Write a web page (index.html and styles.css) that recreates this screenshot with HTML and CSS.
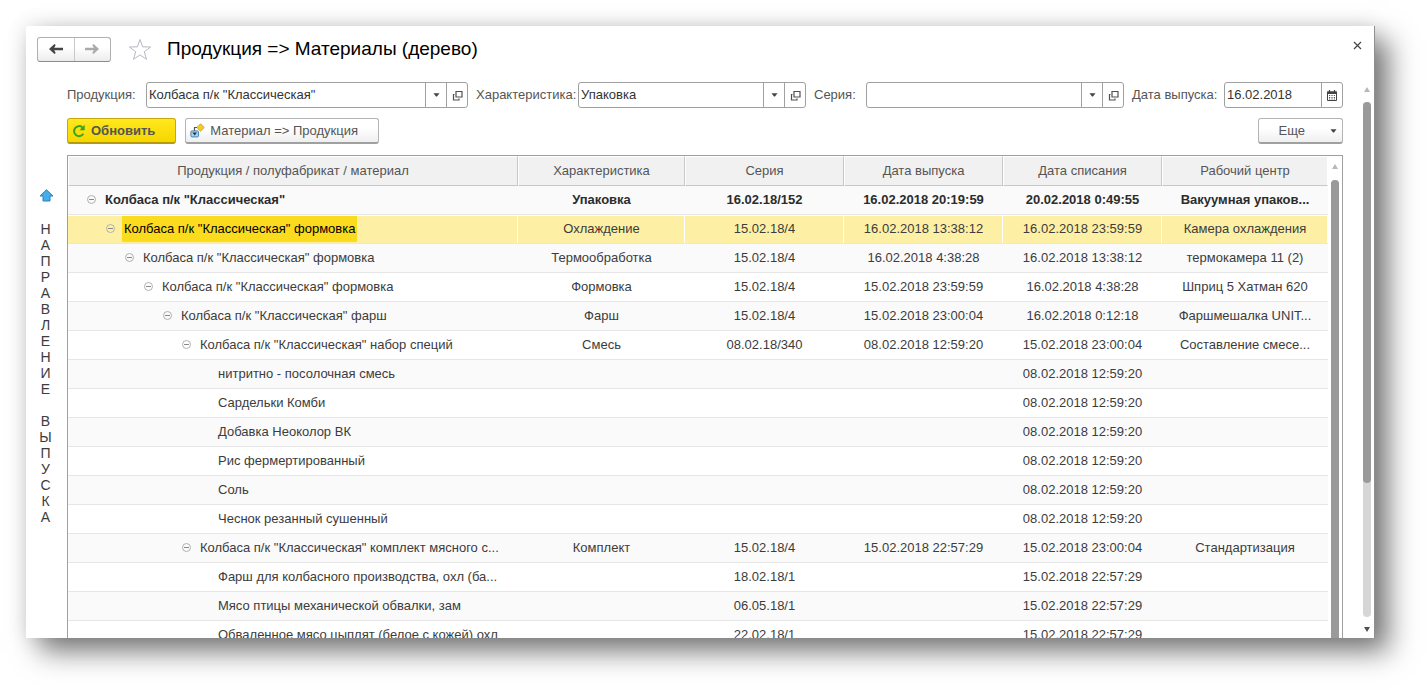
FILE: index.html
```html
<!DOCTYPE html>
<html lang="ru">
<head>
<meta charset="utf-8">
<title>Продукция =&gt; Материалы (дерево)</title>
<link rel="stylesheet" href="styles.css">
</head>
<body>
<svg class="defs" aria-hidden="true">
  <symbol id="caret" viewBox="0 0 7 4"><path d="M0.5 0.3h6L4 3.6H3z" fill="#444"/></symbol>
  <symbol id="open" viewBox="0 0 11 11"><path d="M4 1.500h6v5.500H4zM2.500 4.500h-1v5.500h5.500v-1.500" fill="none" stroke="#505050" stroke-width="1.200"/></symbol>
  <symbol id="minus" viewBox="0 0 9 9"><circle cx="4.500" cy="4.500" r="4" fill="none" stroke="#b0b0b0"/><path d="M2 4.500h5" stroke="#888"/></symbol>
</svg>
<main class="window">
  <header class="titlebar">
    <div class="nav">
      <button class="nav-btn" type="button" aria-label="Назад"><svg width="14" height="10" viewBox="0 0 14 10"><path d="M0 5L5.500 0l1.200 1-1.500 2.700H14v2.600H5.200L6.700 9l-1.200 1z" fill="#444"/></svg></button>
      <button class="nav-btn" type="button" aria-label="Вперед"><svg width="14" height="10" viewBox="0 0 14 10"><path d="M14 5L8.500 0 7.300 1l1.500 2.700H0v2.600h8.800L7.300 9l1.200 1z" fill="#aaa"/></svg></button>
    </div>
    <button class="plain" type="button" aria-label="В избранное"><svg width="24" height="23" viewBox="0 0 24 23"><path d="M12 1.500l2.600 7.300 8 .2-6.300 4.800 2.200 7.500-6.500-4.400-6.500 4.400 2.200-7.500L1.400 9l8-.2z" fill="none" stroke="#b4bac2"/></svg></button>
    <h1>Продукция =&gt; Материалы (дерево)</h1>
    <button class="plain close" type="button" aria-label="Закрыть"><svg width="9" height="9" viewBox="0 0 9 9"><path d="M1 1l7 7M8 1L1 8" stroke="#444" stroke-width="1.200"/></svg></button>
  </header>
  <div class="body">
    <aside class="direction">
      <svg width="15" height="13" viewBox="0 0 15 13"><path d="M7.500 .8l6.500 6.200h-3v5H4V7H1z" fill="#45aee8" stroke="#2683bb"/></svg>
      <p>Н
А
П
Р
А
В
Л
Е
Н
И
Е

В
Ы
П
У
С
К
А</p>
    </aside>
    <div class="content">
      <form class="filters">
        <label for="product">Продукция:</label>
        <div class="field"><input id="product" type="text" value='Колбаса п/к "Классическая"'><button type="button" aria-label="Выбрать"><svg width="7" height="4"><use href="#caret"/></svg></button><button type="button" aria-label="Открыть"><svg width="11" height="11"><use href="#open"/></svg></button></div>
        <label for="feature">Характеристика:</label>
        <div class="field"><input id="feature" type="text" value="Упаковка"><button type="button" aria-label="Выбрать"><svg width="7" height="4"><use href="#caret"/></svg></button><button type="button" aria-label="Открыть"><svg width="11" height="11"><use href="#open"/></svg></button></div>
        <label for="series">Серия:</label>
        <div class="field"><input id="series" type="text"><button type="button" aria-label="Выбрать"><svg width="7" height="4"><use href="#caret"/></svg></button><button type="button" aria-label="Открыть"><svg width="11" height="11"><use href="#open"/></svg></button></div>
        <label for="date">Дата выпуска:</label>
        <div class="field"><input id="date" type="text" value="16.02.2018"><button type="button" aria-label="Календарь"><svg width="10" height="11" viewBox="0 0 10 11"><path d="M.5 2h9v8.500h-9z" fill="#fff" stroke="#444"/><path d="M0 1.500h10v2.500H0z" fill="#444"/><path d="M2.500 0v2M7.500 0v2" stroke="#444" stroke-width="1.200"/><path d="M2 5.500h6M2 7.500h6M2 9h6" stroke="#444" stroke-width=".9" stroke-dasharray="1.200 1.200"/></svg></button></div>
      </form>
      <div class="commands">
        <button class="btn primary" type="button"><svg width="14" height="14" viewBox="0 0 14 14"><path d="M11.300 9.800A5 5 0 1 1 10.300 3.300" fill="none" stroke="#35a51d" stroke-width="2"/><path d="M12.700 .8v5.400H7.400z" fill="#35a51d"/></svg>Обновить</button>
        <button class="btn" type="button"><svg width="15" height="15" viewBox="0 0 15 15"><path d="M10.500 .8l3.800 3.700-3.800 3.700-3.700-3.700z" fill="#f5c928" stroke="#c99d16" stroke-width=".8"/><path d="M7 4.500H4.500V11" fill="none" stroke="#555" stroke-width="1.200"/><rect x=".9" y="7.900" width="7.600" height="6" rx="1" fill="#a6d4f0" stroke="#4c86aa"/><path d="M2.400 9.500h4.600L4.700 12.500z" fill="#1c3550"/></svg>Материал =&gt; Продукция</button>
        <button class="btn more" type="button">Еще<svg width="7" height="4"><use href="#caret"/></svg></button>
      </div>
      <div class="grid">
        <table>
          <colgroup><col><col class="w-feature"><col class="w-mid"><col class="w-mid"><col class="w-mid"><col class="w-center"></colgroup>
          <thead><tr><th>Продукция / полуфабрикат / материал</th><th>Характеристика</th><th>Серия</th><th>Дата выпуска</th><th>Дата списания</th><th>Рабочий центр</th></tr></thead>
          <tbody>
            <tr class="root"><td class="l0"><svg><use href="#minus"/></svg><span>Колбаса п/к "Классическая"</span></td><td>Упаковка</td><td>16.02.18/152</td><td>16.02.2018 20:19:59</td><td>20.02.2018 0:49:55</td><td>Вакуумная упаков...</td></tr>
            <tr class="selected"><td class="l1"><svg><use href="#minus"/></svg><span>Колбаса п/к "Классическая" формовка</span></td><td>Охлаждение</td><td>15.02.18/4</td><td>16.02.2018 13:38:12</td><td>16.02.2018 23:59:59</td><td>Камера охлаждения</td></tr>
            <tr><td class="l2"><svg><use href="#minus"/></svg><span>Колбаса п/к "Классическая" формовка</span></td><td>Термообработка</td><td>15.02.18/4</td><td>16.02.2018 4:38:28</td><td>16.02.2018 13:38:12</td><td>термокамера 11 (2)</td></tr>
            <tr><td class="l3"><svg><use href="#minus"/></svg><span>Колбаса п/к "Классическая" формовка</span></td><td>Формовка</td><td>15.02.18/4</td><td>15.02.2018 23:59:59</td><td>16.02.2018 4:38:28</td><td>Шприц 5 Хатман 620</td></tr>
            <tr><td class="l4"><svg><use href="#minus"/></svg><span>Колбаса п/к "Классическая" фарш</span></td><td>Фарш</td><td>15.02.18/4</td><td>15.02.2018 23:00:04</td><td>16.02.2018 0:12:18</td><td>Фаршмешалка UNIT...</td></tr>
            <tr><td class="l5"><svg><use href="#minus"/></svg><span>Колбаса п/к "Классическая" набор специй</span></td><td>Смесь</td><td>08.02.18/340</td><td>08.02.2018 12:59:20</td><td>15.02.2018 23:00:04</td><td>Составление смесе...</td></tr>
            <tr><td class="l6"><span>нитритно - посолочная смесь</span></td><td></td><td></td><td></td><td>08.02.2018 12:59:20</td><td></td></tr>
            <tr><td class="l6"><span>Сардельки Комби</span></td><td></td><td></td><td></td><td>08.02.2018 12:59:20</td><td></td></tr>
            <tr><td class="l6"><span>Добавка Неоколор ВК</span></td><td></td><td></td><td></td><td>08.02.2018 12:59:20</td><td></td></tr>
            <tr><td class="l6"><span>Рис фермертированный</span></td><td></td><td></td><td></td><td>08.02.2018 12:59:20</td><td></td></tr>
            <tr><td class="l6"><span>Соль</span></td><td></td><td></td><td></td><td>08.02.2018 12:59:20</td><td></td></tr>
            <tr><td class="l6"><span>Чеснок резанный сушенный</span></td><td></td><td></td><td></td><td>08.02.2018 12:59:20</td><td></td></tr>
            <tr><td class="l5"><svg><use href="#minus"/></svg><span>Колбаса п/к "Классическая" комплект мясного с...</span></td><td>Комплект</td><td>15.02.18/4</td><td>15.02.2018 22:57:29</td><td>15.02.2018 23:00:04</td><td>Стандартизация</td></tr>
            <tr><td class="l6"><span>Фарш для колбасного производства, охл (ба...</span></td><td></td><td>18.02.18/1</td><td></td><td>15.02.2018 22:57:29</td><td></td></tr>
            <tr><td class="l6"><span>Мясо птицы механической обвалки, зам</span></td><td></td><td>06.05.18/1</td><td></td><td>15.02.2018 22:57:29</td><td></td></tr>
            <tr><td class="l6"><span>Обваленное мясо цыплят (белое с кожей) охл</span></td><td></td><td>22.02.18/1</td><td></td><td>15.02.2018 22:57:29</td><td></td></tr>
          </tbody>
        </table>
        <div class="scroll inner"><i class="up"></i><i class="track"><i class="thumb"></i></i></div>
      </div>
    </div>
    <div class="scroll outer"><i class="up"></i><i class="track"><i class="thumb"></i></i><i class="down"></i></div>
  </div>
</main>
</body>
</html>
```
FILE: styles.css
```css
* { box-sizing: border-box; }

body {
  margin: 0;
  height: 100vh;
  padding: 26px 52px 52px 26px;
  background: #fff;
  font: 13px/16px "Liberation Sans", Arial, sans-serif;
  color: #3c3c3c;
}

button, input { font: inherit; color: inherit; }
button { cursor: pointer; }
.defs { display: none; }

.window {
  display: flex;
  flex-direction: column;
  height: 100%;
  border-right: 1px solid #909090;
  background: #fff;
  box-shadow: 0 0 20px rgba(0, 0, 0, .12), 14px 14px 26px rgba(0, 0, 0, .5);
}

.titlebar {
  display: flex;
  align-items: center;
  flex: none;
  height: 46px;
  padding: 0 11px;
}

.nav {
  display: flex;
  width: 74px;
  height: 25px;
  margin-right: 17px;
  border: 1px solid #b0b0b0;
  border-bottom-color: #8c8c8c;
  border-radius: 3px;
  background: linear-gradient(#fff 40%, #ececec);
}

.nav-btn {
  display: flex;
  flex: 1;
  align-items: center;
  justify-content: center;
  padding: 0;
  border: 0;
  background: none;
}
.nav-btn + .nav-btn { border-left: 1px solid #c8c8c8; }

.plain { display: flex; padding: 0; border: 0; background: none; }
.close { margin: 0 1px 8px auto; }

h1 {
  margin: 0 0 0 15px;
  font-size: 19px;
  line-height: 24px;
  font-weight: 400;
  color: #000;
}

.body { display: flex; flex: 1; min-height: 0; }

.direction {
  display: flex;
  flex: none;
  flex-direction: column;
  align-items: center;
  width: 41px;
  padding-top: 117px;
}
.direction p {
  margin: 19px 2px 0 0;
  font-size: 14px;
  white-space: pre-line;
  text-align: center;
}

.content {
  display: flex;
  flex: 1;
  flex-direction: column;
  min-width: 0;
  padding-top: 10px;
}

.filters {
  display: grid;
  grid-template-columns: 79px 322fr 110px 228fr 60px 258fr 100px 119fr;
  align-items: center;
  flex: none;
  height: 26px;
  color: #555;
}
.filters label { white-space: nowrap; }
.filters label:not(:first-child) { padding-left: 8px; }

.field {
  display: flex;
  min-width: 0;
  height: 26px;
  border: 1px solid #a0a0a0;
  border-radius: 3px;
  background: #fff;
  color: #333;
}
.field input {
  flex: 1;
  min-width: 0;
  padding: 0 2px;
  border: 0;
  outline: 0;
  background: none;
}
.field button {
  display: flex;
  flex: none;
  align-items: center;
  justify-content: center;
  width: 21px;
  padding: 0;
  border: 0;
  border-left: 1px solid #a0a0a0;
  background: none;
}

.commands { display: flex; flex: none; gap: 9px; margin: 10px 0 11px; }

.btn {
  display: flex;
  align-items: center;
  gap: 5px;
  height: 26px;
  padding: 0 20px 0 4px;
  border: 1px solid #b4b4b4;
  border-bottom: 2px solid #a0a0a0;
  border-radius: 3px;
  background: linear-gradient(#fff 40%, #efefef);
  color: #555;
}
.primary {
  border-color: #c8a90c;
  border-bottom-color: #b59a10;
  background: linear-gradient(#ffe81e, #f6d600);
  font-weight: 700;
}
.more { gap: 25px; margin-left: auto; padding: 0 5px 0 20px; }

.grid {
  display: flex;
  flex: 1;
  min-height: 0;
  overflow: hidden;
  border: 1px solid #a0a0a0;
  border-bottom: 0;
}

table {
  flex: 1;
  align-self: flex-start;
  width: 0;
  table-layout: fixed;
  border-collapse: separate;
  border-spacing: 0;
}
.w-feature { width: 167px; }
.w-mid { width: 159px; }
.w-center { width: 166px; }

th {
  height: 30px;
  padding: 0;
  border: 1px solid #fff;
  border-right-color: #c8c8c8;
  border-bottom-color: #c8c8c8;
  background: #f1f1f1;
  color: #555;
  font-weight: 400;
}
th:last-child { border-right-color: #fff; }

td {
  height: 29px;
  padding: 0;
  border-bottom: 1px solid #e6e6e6;
  overflow: hidden;
  text-align: center;
  white-space: nowrap;
}
td:first-child { text-align: left; }
td svg { width: 9px; height: 9px; margin-right: 7px; }
td span { display: inline-block; padding: 5px 2px; }

tbody tr:nth-child(odd) { background: #fafafa; }
.root { color: #2c2c2c; font-weight: 700; }
.l0 { padding-left: 19px; }
.l1 { padding-left: 38px; }
.l2 { padding-left: 57px; }
.l3 { padding-left: 76px; }
.l4 { padding-left: 95px; }
.l5 { padding-left: 114px; }
.l6 { padding-left: 148px; }

.selected td {
  background: #fdf0a4;
  box-shadow: inset -1px 1px #fff;
}
.selected span { background: #fbdb1d; color: #000; }

.scroll { display: flex; flex: none; flex-direction: column; align-items: center; }
.scroll i { display: block; }
.up, .down { border: 3px solid transparent; }
.up { border-top: 0; border-bottom: 5px solid #b8b8b8; }
.down { border-bottom: 0; border-top: 5px solid #505050; }
.track { flex: 1; width: 8px; border-radius: 4px; background: #d6d6d6; }
.thumb { border-radius: 4px; background: #9a9a9a; }

.inner { width: 14px; padding-top: 8px; }
.inner .track { margin-top: 11px; border-radius: 4px 4px 0 0; }
.inner .thumb { height: 100%; border-radius: 4px 4px 0 0; }

.outer { width: 15px; margin-left: 16px; padding: 15px 0 6px; }
.outer .track { margin: 10px 0; }
.outer .thumb { height: 74%; }
```
